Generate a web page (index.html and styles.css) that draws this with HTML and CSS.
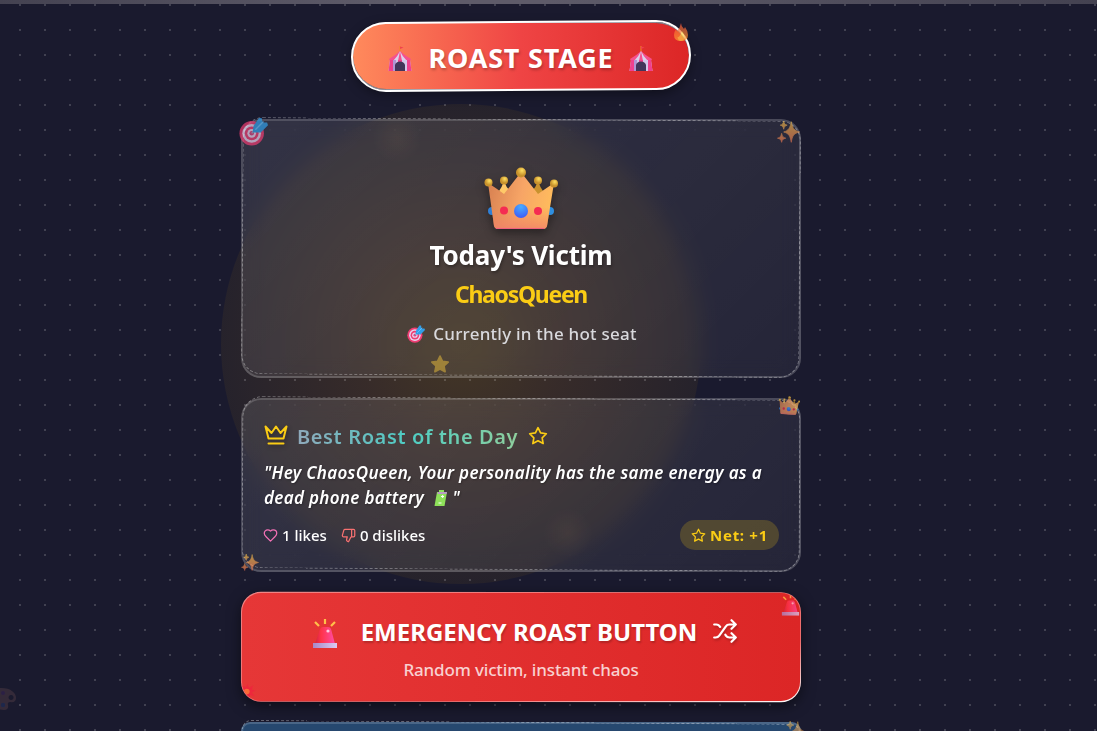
FILE: index.html
```html
<!DOCTYPE html>
<html lang="en">
<head>
    <meta charset="UTF-8">
    <meta name="viewport" content="width=device-width, initial-scale=1.0">
    <title>Roast Stage</title>
    <link rel="stylesheet" href="styles.css">
</head>
<body>
    <!-- shared icons -->
    <svg class="sprite" width="0" height="0">
        <defs>
            <linearGradient id="gCrown" x1="0" y1="0.3" x2="1" y2="0.5">
                <stop offset="0" stop-color="#d98252"/>
                <stop offset="0.5" stop-color="#f7a566"/>
                <stop offset="1" stop-color="#ffbd5c"/>
            </linearGradient>
            <linearGradient id="gCrownBase" x1="0" y1="0" x2="0" y2="1">
                <stop offset="0.6" stop-color="#f4845c" stop-opacity="0"/>
                <stop offset="1" stop-color="#f0806a" stop-opacity="0.8"/>
            </linearGradient>
            <radialGradient id="gGold" cx="0.6" cy="0.3">
                <stop offset="0" stop-color="#ffdf60"/>
                <stop offset="1" stop-color="#c8922c"/>
            </radialGradient>
            <radialGradient id="gBlue" cx="0.5" cy="0.2" r="0.8">
                <stop offset="0" stop-color="#48adff"/>
                <stop offset="1" stop-color="#3f5cf6"/>
            </radialGradient>
            <linearGradient id="gSparkle" x1="0" y1="0" x2="0" y2="1">
                <stop offset="0" stop-color="#ffc94a"/>
                <stop offset="1" stop-color="#ff7f56"/>
            </linearGradient>
            <linearGradient id="gSiren" x1="0" y1="0" x2="1" y2="0">
                <stop offset="0" stop-color="#cf2342"/>
                <stop offset="0.3" stop-color="#ff3348"/>
                <stop offset="1" stop-color="#ff4da6"/>
            </linearGradient>
            <linearGradient id="gSirenBase" x1="0" y1="0" x2="1" y2="0">
                <stop offset="0" stop-color="#a888c8"/>
                <stop offset="1" stop-color="#dccbf2"/>
            </linearGradient>
            <linearGradient id="gFire" x1="0" y1="0" x2="0" y2="1">
                <stop offset="0" stop-color="#f2523c"/>
                <stop offset="1" stop-color="#ffa030"/>
            </linearGradient>
        </defs>
        <symbol id="crown" viewBox="0 0 74 64">
            <circle cx="8" cy="44" r="4" fill="#2f7fd6"/>
            <circle cx="66" cy="44" r="4" fill="#2f8fe0"/>
            <path d="M20 14Q18 20 15 24L22 31 26 24Q22 20 20 14z" fill="#ffc968"/>
            <path d="M54 14Q52 20 48 24L54 30 59 24Q56 20 54 14z" fill="#c9922e"/>
            <circle cx="20" cy="13.500" r="4" fill="url(#gGold)"/>
            <circle cx="54" cy="13.500" r="4" fill="url(#gGold)"/>
            <path d="M4 16Q12 21 20 27L34 9q3-3 6 0L54 27Q61 22 70 16L63 59q-1 3-4 3H14q-3 0-4-3z" fill="url(#gCrown)"/>
            <path d="M4 16Q12 21 20 27L34 9q3-3 6 0L54 27Q61 22 70 16L63 59q-1 3-4 3H14q-3 0-4-3z" fill="url(#gCrownBase)"/>
            <path d="M12 61.500h48" stroke="#ee5f7d" stroke-width="1"/>
            <circle cx="4.500" cy="15.500" r="4" fill="url(#gGold)"/>
            <circle cx="37" cy="5.500" r="5" fill="url(#gGold)"/>
            <circle cx="70" cy="16.500" r="4" fill="url(#gGold)"/>
            <circle cx="20" cy="43.500" r="4" fill="#f52b52"/>
            <circle cx="54" cy="44" r="4" fill="#f52b52"/>
            <circle cx="37" cy="44" r="7" fill="url(#gBlue)"/>
        </symbol>
        <symbol id="target" viewBox="0 0 32 32">
            <circle cx="14" cy="18" r="13.500" fill="#ee3d72"/>
            <circle cx="14" cy="18" r="10.300" fill="#e9d3ee"/>
            <circle cx="14" cy="18" r="7.600" fill="#ee3d72"/>
            <circle cx="14" cy="18" r="4.800" fill="#e9d3ee"/>
            <circle cx="14" cy="18" r="2.500" fill="#d84380"/>
            <path d="M14 18L23 9" stroke="#b6a4c0" stroke-width="1.500"/>
            <path d="M16 10l6-9 3 0 1 5 5 0 1 3-8 8-9 0z" fill="#319ee8"/>
            <path d="M18 14L27 5" stroke="#64c2ff" stroke-width="1.500"/>
        </symbol>
        <symbol id="sparkles" viewBox="0 0 32 32">
            <path d="M20 1c1.500 9 4 13 12 15-8 2-10.500 5-12 15-1.500-10-4-13-11-15 7-2 9.500-6 11-15zM9 0c.7 4 2 5.500 5 6-3 1-4.300 2-5 6-.7-4-2-5-5-6 3-.5 4.300-2 5-6zM6 18c.7 4 2 6 6 7-4 1-5.300 2-6 6-.7-4-2-5-6-6 4-1 5.300-3 6-7z" fill="url(#gSparkle)" stroke="url(#gSparkle)" stroke-width="1.200" stroke-linejoin="round"/>
        </symbol>
        <symbol id="siren" viewBox="0 0 26 32">
            <path d="M13 1v5M3 4l4 4M23 4l-4 4" stroke="#ffc04a" stroke-width="2.200"/>
            <path d="M8 11q1-2 3-2h5q2 0 3 2l4 15H3z" fill="url(#gSiren)"/>
            <circle cx="16" cy="13" r="1.600" fill="#ffc7dc"/>
            <path d="M1 25h24v5H1z" fill="url(#gSirenBase)"/>
        </symbol>
        <symbol id="tent" viewBox="0 0 24 26">
            <path d="M12 0v7" stroke="#f08a24" stroke-width="1"/>
            <path d="M12 .5l3.500 1-3.500 1.500z" fill="#f0434f"/>
            <path d="M12 5Q8 9 1 13l1 2h20l1-2Q16 9 12 5z" fill="#f5518e"/>
            <path d="M12 5Q10 10 5 15h5zM12 5l2 10h5Q14 10 12 5z" fill="#d9d2ee"/>
            <path d="M2 14h20l1.500 11H.5z" fill="#d5c6ea"/>
            <path d="M2 14h3v11H.5zM10 14h4v3h-4zM19 14h3l1.500 11H19z" fill="#f0408e"/>
            <path d="M5 14h3v11H5z" fill="#b294d4"/>
            <path d="M7 25v-6q1-3.500 5-3.500t5 3.500v6z" fill="#42355a"/>
        </symbol>
        <symbol id="fire" viewBox="0 0 14 18">
            <path d="M7 0q0 3 3 6l1-2q3 4 3 8 0 6-7 6T0 12q0-3 2-6l1 2Q6 5 7 0z" fill="url(#gFire)"/>
            <path d="M8 8q3 4 2.500 7-.5 3-3.500 3t-3.500-4q2 1 4.500-6z" fill="#ffd04a"/>
        </symbol>
        <symbol id="star-fill" viewBox="0 0 24 24">
            <path d="M12 2.500l3 6.300 6.800.9-5 4.700 1.300 6.900-6.100-3.400-6.100 3.400 1.300-6.900-5-4.700 6.800-.9z" fill="#ffcf3d" stroke="#ffcf3d" stroke-width="2" stroke-linejoin="round"/>
        </symbol>
        <symbol id="battery" viewBox="0 0 14 18">
            <path d="M5 1l5 0 0 2h3l-2.500 14H.5L3 3h2z" fill="#8ee05a"/>
            <path d="M4 3h9l-.4 2H3.400z" fill="#b99bc4"/>
            <path d="M7 7.500h3M8.700 6v3M4.500 14h3" stroke="#fff" stroke-width="1"/>
        </symbol>
        <symbol id="palette" viewBox="0 0 26 24">
            <path fill-rule="evenodd" d="M10 1C20 1 25 6 25 11q0 5-6 4-3 0-2 3 1 5-4 5C4 23-2 17 0 10 1 4 5 1 10 1zm10 7a2.500 2.500 0 1 0 .1 0z" fill="#c98878"/>
            <circle cx="12" cy="6" r="2" fill="#8e44c8"/>
            <circle cx="7" cy="10" r="2" fill="#e0348e"/>
            <circle cx="7" cy="15" r="2" fill="#22b8a0"/>
            <circle cx="12" cy="18" r="2.200" fill="#3472ee"/>
        </symbol>
        <symbol id="boom" viewBox="0 0 24 24">
            <path d="M12 1l2 6 6-4-2 6 6 2-6 2 4 6-6-2-2 6-4-5-6 4 2-7-6-3 6-3-3-6 7 3z" fill="#f0243e"/>
            <circle cx="11" cy="12" r="4" fill="#ff7838"/>
        </symbol>
        <!-- outlined icons -->
        <symbol id="star" viewBox="0 0 24 24">
            <path d="M12 2l3.090 6.260L22 9.270l-5 4.870 1.180 6.880L12 17.770l-6.180 3.250L7 14.140 2 9.270l6.910-1.010z"/>
        </symbol>
        <symbol id="crown-line" viewBox="0 0 24 20">
            <path d="M1.500 1.500l3 12h15l3-12-6 6.500L12 1.500 7.500 8zM4.500 18.500h15"/>
        </symbol>
        <symbol id="heart" viewBox="0 0 24 24">
            <path d="M19 14c1.490-1.460 3-3.210 3-5.500A5.500 5.500 0 0 0 16.500 3c-1.760 0-3 .5-4.500 2-1.500-1.500-2.740-2-4.500-2A5.500 5.500 0 0 0 2 8.500c0 2.300 1.500 4.050 3 5.500l7 7z"/>
        </symbol>
        <symbol id="thumb-down" viewBox="0 0 24 24">
            <path d="M17 14V2M9 18.120L10 14H4.170a2 2 0 0 1-1.920-2.560l2.330-8A2 2 0 0 1 6.500 2H20a2 2 0 0 1 2 2v8a2 2 0 0 1-2 2h-2.760a2 2 0 0 0-1.790 1.110L12 22a3.130 3.130 0 0 1-3-3.880z"/>
        </symbol>
        <symbol id="shuffle" viewBox="0 0 24 24">
            <path d="M2 18h1.400c1.300 0 2.500-.6 3.300-1.700l6.100-8.600c.7-1.100 2-1.700 3.300-1.700H22M18 2l4 4-4 4M2 6h1.900c1.500 0 2.900.9 3.600 2.200M22 18h-5.900c-1.300 0-2.600-.7-3.300-1.800l-.5-.8M18 14l4 4-4 4"/>
        </symbol>
    </svg>

    <div class="top-bar"></div>
    <div class="spotlight"></div>
    <div class="dots"></div>
    <svg class="floating palette"><use href="#palette"/></svg>

    <main class="container">
        <header class="stage-title">
            <svg class="tent"><use href="#tent"/></svg>
            <h1>ROAST STAGE</h1>
            <svg class="tent"><use href="#tent"/></svg>
            <svg class="sticker fire"><use href="#fire"/></svg>
        </header>

        <section class="card victim">
            <svg class="sticker target-corner"><use href="#target"/></svg>
            <svg class="sticker sparkle-right"><use href="#sparkles"/></svg>
            <svg class="victim-crown"><use href="#crown"/></svg>
            <h2>Today's Victim</h2>
            <p class="victim-name">ChaosQueen</p>
            <p class="hot-seat"><svg><use href="#target"/></svg><span>Currently in the hot seat</span></p>
            <svg class="floating star-float"><use href="#star-fill"/></svg>
            <span class="glow glow-top"></span>
        </section>

        <section class="card best">
            <svg class="sticker crown-corner"><use href="#crown"/></svg>
            <svg class="sticker sparkle-bottom"><use href="#sparkles"/></svg>
            <span class="glow glow-bottom"></span>
            <div class="best-header">
                <svg class="line-icon crown-icon"><use href="#crown-line"/></svg>
                <h3>Best Roast of the Day</h3>
                <svg class="line-icon star-icon"><use href="#star"/></svg>
            </div>
            <blockquote>"Hey ChaosQueen, Your personality has the same energy as a<br>dead phone battery <svg class="battery"><use href="#battery"/></svg> "</blockquote>
            <div class="stats">
                <span class="stat"><svg class="line-icon heart"><use href="#heart"/></svg>1 likes</span>
                <span class="stat"><svg class="line-icon thumb"><use href="#thumb-down"/></svg>0 dislikes</span>
                <span class="net"><svg class="line-icon"><use href="#star"/></svg>Net: +1</span>
            </div>
        </section>

        <button class="emergency" type="button">
            <span class="emergency-inner">
                <svg class="sticker siren-corner"><use href="#siren"/></svg>
                <svg class="sticker boom-corner"><use href="#boom"/></svg>
                <span class="emergency-title">
                    <svg class="siren"><use href="#siren"/></svg>
                    <span class="emergency-text">EMERGENCY ROAST BUTTON</span>
                    <svg class="line-icon shuffle"><use href="#shuffle"/></svg>
                </span>
                <span class="emergency-sub">Random victim, instant chaos</span>
            </span>
        </button>

        <section class="card next">
            <svg class="sticker sparkle-next"><use href="#sparkles"/></svg>
        </section>
    </main>
</body>
</html>
```
FILE: styles.css
```css
* {
    margin: 0;
    padding: 0;
    box-sizing: border-box;
}
body {
    font-family: 'Comic Sans MS', 'Noto Sans', sans-serif;
    background: #1a1a2e;
    color: #fff;
    height: 100vh;
    overflow: hidden;
    position: relative;
}
svg {
    display: block;
    flex-shrink: 0;
}
.sprite {
    position: absolute;
}
.top-bar {
    height: 4px;
    background: linear-gradient(90deg, #444251, #5e5b69 35%, #5e5b69 50%, #444251);
}
.dots {
    position: absolute;
    inset: 4px 0 0;
    background-image: radial-gradient(circle at 20.300px 1px, rgba(255, 255, 255, 0.17) 1px, transparent 1.300px);
    background-size: 25px 25px;
}
.spotlight {
    position: absolute;
    left: 221px;
    top: 104px;
    width: 480px;
    height: 480px;
    border-radius: 50%;
    background: radial-gradient(circle, rgba(250, 180, 0, 0.19) 0%, rgba(250, 160, 10, 0.13) 30%, rgba(250, 180, 0, 0.055) 70%);
}
.container {
    position: relative;
    width: 560px;
    height: 709px;
    margin: 18px 0 0 241px;
    display: flex;
    flex-direction: column;
}

/* title pill */
.stage-title {
    position: relative;
    align-self: center;
    width: 338px;
    height: 68px;
    flex-shrink: 0;
    margin-bottom: 29px;
    display: flex;
    align-items: center;
    justify-content: center;
    gap: 17px;
    border-radius: 35px;
    border: 1px solid rgba(255, 255, 255, 0.5);
    background: linear-gradient(90deg, #ff8a5c, #ef4444 50%, #dc2626);
    background-clip: padding-box;
    box-shadow: 0 4px 12px rgba(0, 0, 0, 0.4);
}
.stage-title::before {
    content: '';
    position: absolute;
    inset: -2px;
    border: 2px solid #fff;
    border-radius: 36px;
    transform: rotate(-0.4deg);
}
.stage-title h1 {
    font-size: 27px;
    line-height: 38px;
    margin-top: 3px;
    font-weight: 700;
    letter-spacing: 0.800px;
    text-shadow: 1px 2px 3px rgba(0, 0, 0, 0.25);
}
.tent {
    width: 24px;
    height: 26px;
    margin: 6px 0 0 -1px;
}

.sticker {
    position: absolute;
    z-index: 2;
}
.fire {
    width: 14px;
    height: 18px;
    right: 1px;
    top: 0;
    opacity: 0.7;
}

/* cards */
.card {
    position: relative;
    flex-shrink: 0;
    border: 2px solid rgba(255, 255, 255, 0.17);
    border-radius: 20px;
    background: linear-gradient(135deg, rgba(255, 255, 255, 0.11), rgba(255, 255, 255, 0.05));
    backdrop-filter: blur(10px);
}
.card::before {
    content: '';
    position: absolute;
    inset: -1px;
    border: 1px dashed rgba(255, 255, 255, 0.35);
    border-radius: 20px;
    transform: translateY(-1px) rotate(0.4deg);
    pointer-events: none;
}
.victim {
    height: 259px;
    margin-bottom: 20px;
    padding-top: 46px;
    display: flex;
    flex-direction: column;
    align-items: center;
}
.victim-crown {
    width: 74px;
    height: 64px;
    filter: drop-shadow(0 4px 5px rgba(0, 0, 0, 0.4));
}
.victim h2 {
    margin-top: 5px;
    font-size: 26px;
    line-height: 38px;
    font-weight: 700;
    letter-spacing: -0.200px;
    text-shadow: 1px 2px 3px rgba(0, 0, 0, 0.3);
}
.victim-name {
    margin-top: 4px;
    font-size: 23px;
    line-height: 32px;
    font-weight: 700;
    letter-spacing: -1.300px;
    color: #facc15;
}
.hot-seat {
    margin: 10px 0 0 2px;
    display: flex;
    align-items: center;
    gap: 8px;
    font-size: 17px;
    line-height: 28px;
    font-weight: 500;
    letter-spacing: 0.230px;
    color: #d9d9dd;
}
.hot-seat svg {
    width: 18px;
    height: 18px;
}
.target-corner {
    width: 29px;
    height: 29px;
    left: -4px;
    top: -4px;
    opacity: 0.7;
}
.sparkle-right {
    width: 23px;
    height: 22px;
    right: -1px;
    top: 0;
    opacity: 0.6;
}
.floating {
    position: absolute;
}
.star-float {
    width: 20px;
    height: 20px;
    left: 187px;
    bottom: 2px;
    opacity: 0.45;
}
.palette {
    width: 26px;
    height: 24px;
    left: -9px;
    top: 687px;
    opacity: 0.15;
}
.glow {
    position: absolute;
    width: 50px;
    height: 50px;
    border-radius: 50%;
    background: radial-gradient(circle, rgba(255, 190, 110, 0.05), transparent 70%);
}
.glow-top {
    left: 129px;
    top: -8px;
}
.glow-bottom {
    left: 300px;
    bottom: 12px;
}

.best {
    height: 174px;
    margin-bottom: 20px;
    padding: 20px 20px 0 21px;
}
.best-header {
    display: flex;
    align-items: center;
    gap: 10px;
    height: 33px;
}
.line-icon {
    fill: none;
    stroke: currentColor;
    stroke-width: 2;
    stroke-linecap: round;
    stroke-linejoin: round;
}
.crown-icon {
    width: 24px;
    height: 20px;
    margin-top: -3px;
    color: #facc15;
    filter: drop-shadow(1px 2px 2px rgba(0, 0, 0, 0.3));
}
.star-icon {
    width: 20px;
    height: 20px;
    margin-top: -2px;
    color: #facc15;
}
.best h3 {
    font-size: 20px;
    line-height: 33px;
    margin-left: -1px;
    font-weight: 600;
    letter-spacing: 0.620px;
    background: linear-gradient(90deg, #8fa9bb, #4ecdc4 50%, #8fcf9d);
    background-clip: text;
    -webkit-background-clip: text;
    color: transparent;
}
.best blockquote {
    margin-top: 7px;
    font-size: 17px;
    line-height: 25px;
    font-weight: 600;
    font-style: italic;
    letter-spacing: 0.310px;
    white-space: nowrap;
    text-shadow: 1px 1px 2px rgba(0, 0, 0, 0.3);
}
.battery {
    display: inline-block;
    width: 14px;
    height: 18px;
    margin: 0 0 0 5px;
    vertical-align: -3px;
}
.stats {
    display: flex;
    align-items: center;
    gap: 15px;
    margin-top: 10px;
    height: 30px;
    font-family: 'Noto Sans', sans-serif;
    font-size: 15px;
    font-weight: 500;
}
.stat {
    display: flex;
    align-items: center;
    gap: 4px;
    margin-left: -1px;
}
.stat svg,
.net svg {
    width: 15px;
    height: 15px;
}
.heart {
    color: #f472b6;
}
.thumb {
    color: #f87171;
}
.net {
    margin-left: auto;
    display: flex;
    align-items: center;
    justify-content: center;
    gap: 4px;
    width: 99px;
    height: 30px;
    border-radius: 15px;
    background: rgba(250, 204, 21, 0.2);
    color: #facc15;
    font-family: 'Comic Sans MS', 'Noto Sans', sans-serif;
    font-weight: 700;
    letter-spacing: 0.700px;
}
.crown-corner {
    width: 22px;
    height: 19px;
    right: -1px;
    top: -4px;
    opacity: 0.7;
    transform: rotate(4deg);
}
.sparkle-bottom {
    width: 18px;
    height: 17px;
    left: -2px;
    bottom: -1px;
    opacity: 0.65;
}

/* emergency button: white sheet tilted behind the red face */
.emergency {
    position: relative;
    height: 110px;
    flex-shrink: 0;
    margin-bottom: 20px;
    border: none;
    border-radius: 20px;
    background: none;
    color: #fff;
    font-family: inherit;
    box-shadow: 0 4px 14px rgba(0, 0, 0, 0.5);
    cursor: pointer;
}
.emergency::before {
    content: '';
    position: absolute;
    inset: 0;
    border-radius: 20px;
    background: linear-gradient(170deg, #f08585, #ee6a6a 70%, #fff);
    transform: rotate(0.05deg);
}
.emergency-inner {
    position: absolute;
    inset: 1px;
    overflow: hidden;
    border-radius: 19px;
    background: linear-gradient(90deg, #e63737, #dc2626);
    display: flex;
    flex-direction: column;
    align-items: center;
    padding-top: 19px;
}
.emergency-title {
    display: flex;
    align-items: center;
    height: 38px;
    padding-left: 8px;
}
.siren {
    width: 26px;
    height: 32px;
    margin: 5px 23px 0 0;
}
.emergency-text {
    font-size: 24px;
    font-weight: 700;
    white-space: nowrap;
    text-shadow: 1px 2px 2px rgba(0, 0, 0, 0.2);
}
.shuffle {
    width: 26px;
    height: 26px;
    margin-left: 15px;
    filter: drop-shadow(1px 2px 1px rgba(0, 0, 0, 0.2));
}
.emergency-sub {
    margin-top: 6px;
    font-size: 17px;
    line-height: 28px;
    font-weight: 500;
    letter-spacing: -0.150px;
    color: rgba(255, 255, 255, 0.78);
}
.siren-corner {
    width: 19px;
    height: 23px;
    right: 0;
    top: 1px;
    opacity: 0.75;
}
.boom-corner {
    width: 17px;
    height: 17px;
    left: -3px;
    bottom: 1px;
    opacity: 0.8;
}

/* only the top edge shows above the fold */
.next {
    flex: 1;
    border-bottom: none;
    border-radius: 20px 20px 0 0;
    background: #26486f;
}
.next::before {
    border-bottom: none;
    border-radius: 20px 20px 0 0;
}
.sparkle-next {
    width: 22px;
    height: 22px;
    right: -7px;
    top: -3px;
    opacity: 0.5;
}
```
